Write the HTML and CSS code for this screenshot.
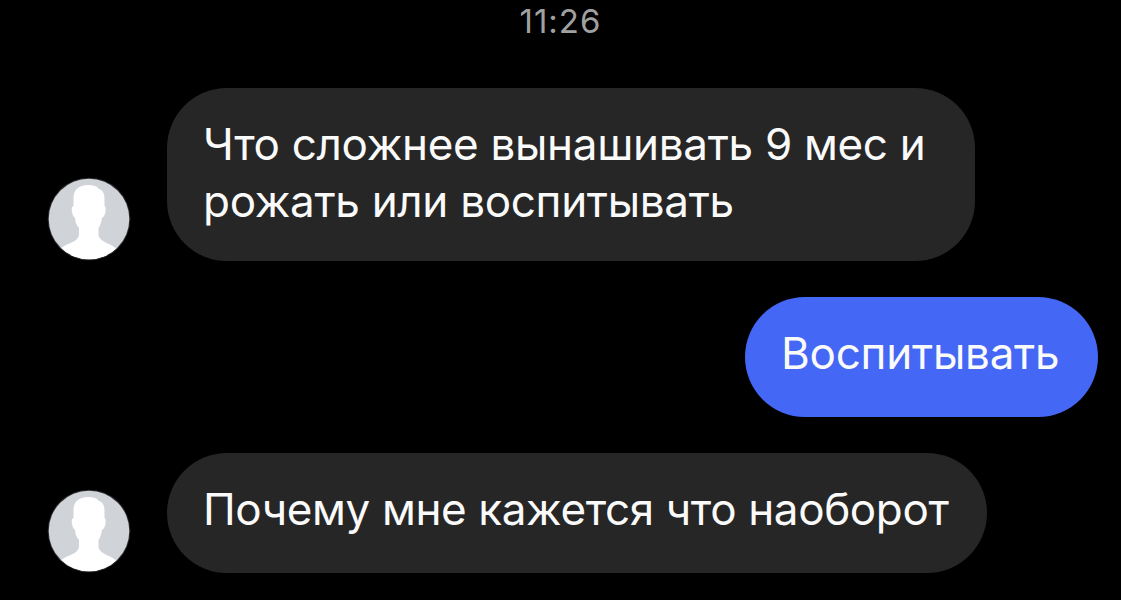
FILE: index.html
```html
<!DOCTYPE html>
<html lang="ru">
<head>
<meta charset="utf-8">
<title>Чат</title>
<link rel="stylesheet" href="styles.css">
</head>
<body>
<svg width="0" height="0" class="defs" aria-hidden="true">
  <symbol id="person" viewBox="0 0 84 84">
    <circle cx="42" cy="42" r="41.3" fill="#2b2c2f"/>
    <clipPath id="disc"><circle cx="42" cy="42" r="40.3"/></clipPath>
    <g clip-path="url(#disc)">
      <rect width="84" height="84" fill="#d0d3d8"/>
      <path fill="#fff" d="M41 8C46 8 50 9 52 12C56 13 57.500 17 57.500 22V29C59 30 59 33 58 37C57.500 39 56 40 55 41C54 46 53 49 51.500 51V57C51.500 62 57 65 62 67C66 69 69 71 71 73V84H12V73C14 71 17 69 21 67C27 65 32 62 32 57V51C30 49 28.500 46 28 41C26.500 40 25.500 38 25 35C24.500 32 24.500 30 26.500 29V21C26.500 13 32 8 41 8Z"/>
    </g>
  </symbol>
</svg>
<main class="chat">
  <time class="time">11:26</time>
  <section class="row">
    <svg class="avatar"><use href="#person"/></svg>
    <div class="bubble long">Что сложнее вынашивать 9 мес и<br>рожать или воспитывать</div>
  </section>
  <section class="row own">
    <div class="bubble blue">Воспитывать</div>
  </section>
  <section class="row">
    <svg class="avatar"><use href="#person"/></svg>
    <div class="bubble reply">Почему мне кажется что наоборот</div>
  </section>
</main>
</body>
</html>
```
FILE: styles.css
```css
* { box-sizing: border-box; }
body { margin: 0; background: #000; font-family: Inter, Roboto, sans-serif; }
.defs { display: block; }
.chat { width: 1121px; height: 600px; overflow: hidden; display: flex; flex-direction: column; }
.time { flex: none; height: 88px; text-align: center; font-size: 33px; line-height: 42px; letter-spacing: 1px; color: #a0a0a0; }
.row { flex: none; display: flex; align-items: flex-end; padding-left: 47px; gap: 36px; margin-bottom: 36px; }
.avatar { width: 84px; height: 84px; flex: none; }
.bubble { background: #262626; color: #fafafa; border-radius: 60px; padding: 28px 36px; font-size: 44px; line-height: 57px; letter-spacing: -0.38px; white-space: nowrap; height: 119.7px; }
.long { width: 808px; height: 173.4px; letter-spacing: -0.31px; }
.own { justify-content: flex-end; padding-right: 23px; }
.blue { width: 353px; background: #4467f5; letter-spacing: -0.25px; }
.reply { width: 820px; }
```
